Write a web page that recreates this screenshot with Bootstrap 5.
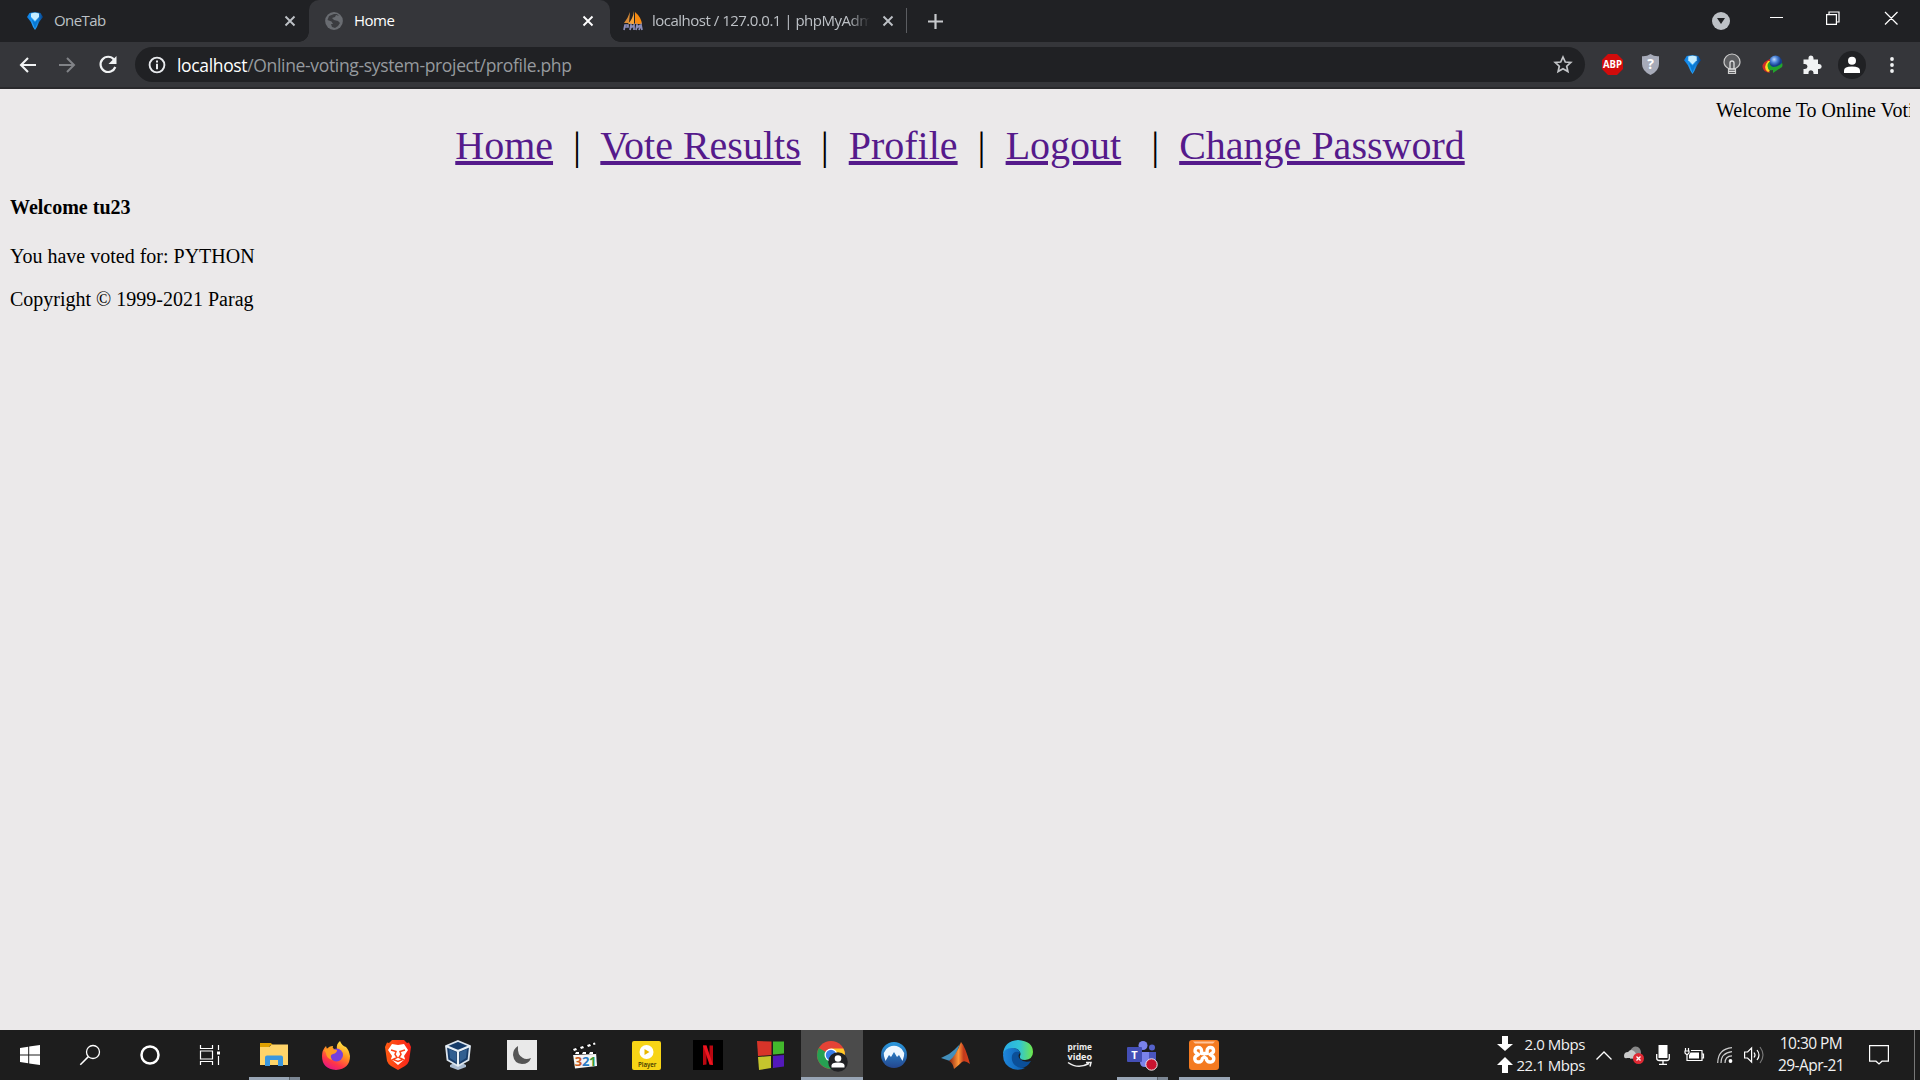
<!DOCTYPE html>
<html lang="en">
<head>
<meta charset="utf-8">
<title>Home</title>
<link href="https://cdn.jsdelivr.net/npm/bootstrap@5.3.0/dist/css/bootstrap.min.css" rel="stylesheet">
<style>
body{width:1920px;height:1080px;overflow:hidden;background:#ebe9ea;font-family:"Open Sans","Noto Sans",sans-serif}
svg{display:block;flex:none;overflow:visible}
.tabstrip{height:42px;background:#202124;color:#bdc1c6;font-size:15px}
.tab-item{height:42px;line-height:40px}
.tab-one{width:309px;padding-left:27px;padding-right:13px}
.tab-live{width:301px;padding-left:16px;padding-right:16px;background:#35363a;color:#fff;border-radius:10px 10px 0 0}
.tab-live::before,.tab-live::after{content:"";position:absolute;bottom:0;width:10px;height:10px}
.tab-live::before{left:-10px;background:radial-gradient(circle at 0 0,transparent 9.5px,#35363a 10px)}
.tab-live::after{right:-10px;background:radial-gradient(circle at 100% 0,transparent 9.5px,#35363a 10px)}
.tab-pma{width:296px;padding-left:13px;padding-right:12px}
.tab-title{white-space:nowrap;overflow:hidden;margin-left:11px;margin-top:-2px}
.title-one{letter-spacing:-.6px}
.title-home{letter-spacing:-.5px}
.title-pma{width:218px;margin-left:9px;letter-spacing:-.5px;-webkit-mask-image:linear-gradient(90deg,#000 90%,transparent);mask-image:linear-gradient(90deg,#000 90%,transparent)}
.tab-rule{width:1px;height:25px;background:#5b5d61;margin-top:-1px}
.tab-plus{margin-left:21px}
.media-dot{margin-right:40px}
.win-btns{margin-right:22px;margin-top:-6px}
.toolbar{height:47px;background:#35363a;border-bottom:2px solid #29292c}
.nav-back{margin-left:19px}
.nav-fwd{margin-left:23px}
.nav-load{margin:0 18px 0 23px}
.omnibox{width:1450px;height:35px;border-radius:18px;background:#202124;padding:0 12px 0 13px}
.url-text{font-size:17.5px;letter-spacing:-.34px;color:#969a9e;line-height:34px;margin-left:11px;white-space:nowrap}
.ext-list{margin-left:7px}
.ext-slot{width:40px;height:40px}
.page-view{height:941px;padding:10px;color:#000;font-family:"Liberation Serif",serif;font-size:20px;line-height:23px}
.ticker{height:23px;padding-left:1706px;overflow:hidden;white-space:nowrap}
.site-nav{font-size:40px;line-height:46px;margin-top:1px;white-space:nowrap}
.site-nav a{color:#551a8b;text-decoration:underline;text-decoration-thickness:4px;text-underline-offset:2px}
.hello{font-size:20px;line-height:23px;font-weight:700;margin:27px 0 0}
.vote-line{margin:26px 0 0}
.copy-line{margin:20px 0 0}
.taskbar{height:50px;background:#1d1d1d;color:#f1f1f1}
.sys-slot{width:60px;height:50px}
.app-list{margin-left:3px}
.app-slot{width:62px;height:50px}
.app-live{background:#4b4b4b}
.runbar{position:absolute;bottom:0;left:6px;width:51px;height:3px;background:#98a5b5}
.run-many{background:linear-gradient(90deg,#98a5b5 40px,#59616a 40px,#59616a 41px,#7b8693 41px)}
.run-full{left:0;width:62px}
.net-text{width:73px;font-size:15px;line-height:21px;letter-spacing:-.45px;text-align:right;white-space:nowrap}
.net-block{width:100px;padding-left:7px;padding-right:5px}
.clock{width:82px;font-size:15.5px;line-height:22.5px;letter-spacing:-.55px;text-align:center;white-space:nowrap;margin-top:-2px}
.notice{width:54px}
.desk-edge{width:6px;height:50px;border-left:1px solid #777;margin-left:8px}
.w28{width:28px}.w32{width:32px}.w26{width:26px}.w36{width:36px}
</style>
<script src="https://cdn.jsdelivr.net/npm/bootstrap@5.3.0/dist/js/bootstrap.bundle.min.js"></script>
</head>
<body class="d-flex flex-column">
<svg width="0" height="0" class="position-absolute">
<defs>
<linearGradient id="gBlue" x1="0" x2="1"><stop offset="0" stop-color="#0a7be0"/><stop offset=".5" stop-color="#2ba8ff"/><stop offset="1" stop-color="#003c86"/></linearGradient>
<linearGradient id="gFox" x1=".8" y1="0" x2=".3" y2="1"><stop offset="0" stop-color="#fff44f"/><stop offset=".4" stop-color="#ff9a1f"/><stop offset=".75" stop-color="#ff3647"/><stop offset="1" stop-color="#e31587"/></linearGradient>
<linearGradient id="gNord" x2="0" y2="1"><stop offset="0" stop-color="#2b9be0"/><stop offset="1" stop-color="#24468e"/></linearGradient>
<linearGradient id="gEdge" x1="0" x2="1"><stop offset="0" stop-color="#27a9e6"/><stop offset=".55" stop-color="#32c5d5"/><stop offset="1" stop-color="#6fe849"/></linearGradient>
<linearGradient id="gEdgeLow" x1="0" x2="1"><stop offset="0" stop-color="#1f87dc"/><stop offset="1" stop-color="#0c5cae"/></linearGradient>
<linearGradient id="gMat" x1="0" x2="1"><stop offset="0" stop-color="#8a1d10"/><stop offset=".45" stop-color="#ff9838"/><stop offset=".7" stop-color="#c23a1c"/><stop offset="1" stop-color="#d8401a"/></linearGradient>
<linearGradient id="gBrave" x1="0" x2="1"><stop offset="0" stop-color="#ff5a12"/><stop offset="1" stop-color="#f8221a"/></linearGradient>
<radialGradient id="gGlobe" cx=".4" cy=".3"><stop offset="0" stop-color="#c3dcff"/><stop offset=".5" stop-color="#4b83d6"/><stop offset="1" stop-color="#153d8c"/></radialGradient>
<symbol id="onetab" viewBox="0 0 16 18"><path d="M2.500 1Q8-.5 13.500 1L16 5Q12 9 10 15L8 18 6 15Q4 9 0 5Z" fill="url(#gBlue)"/><path d="M4 1.500Q8 0 12 1.500L12 5 8 9 4 5Z" fill="#c6edff"/><path d="M4.500 7L8 10l3.500-3L8 17Z" fill="#0879d4"/></symbol>
<symbol id="cross" viewBox="0 0 12 12"><path d="M1.500 1.500l9 9m0-9l-9 9" stroke="currentColor" stroke-width="1.9"/></symbol>
</defs>
</svg>

<header>
<div class="tabstrip d-flex align-items-center">
  <div class="tab-item tab-one d-flex align-items-center">
    <svg width="16" height="18"><use href="#onetab"/></svg>
    <span class="tab-title title-one flex-grow-1">OneTab</span>
    <svg width="12" height="12"><use href="#cross"/></svg>
  </div>
  <div class="tab-item tab-live position-relative d-flex align-items-center">
    <svg width="18" height="18" viewBox="0 0 18 18"><circle cx="9" cy="9" r="8.900" fill="#696c71"/><path d="M9 2L4 4 2.500 8l4 1.500 1.500 2.500H6l1 3 3 1 3-2 2-3-2-2-4-1-2-2 3-1 1-2 3 1-2-2Z" fill="#3b3c40"/></svg>
    <span class="tab-title title-home flex-grow-1">Home</span>
    <svg width="12" height="12"><use href="#cross"/></svg>
  </div>
  <div class="tab-item tab-pma d-flex align-items-center">
    <svg width="20" height="20" viewBox="0 0 20 20"><path d="M7 1L6 12H1Q5 7 7 1Z" fill="#d98b36"/><path d="M11 0V13H5Q10 8 11 0Z" fill="#f5a33a"/><path d="M12 1Q18 6 19 13H12Z" fill="#f78a10"/><path d="M1 19l1-5h3v2H2m5 3l1-5 1 2 2-2v5m2 0l1-5 1 2 2-2m-1 5l2-5 1 5" stroke="#8c8db9" stroke-width="1.700" fill="none"/></svg>
    <span class="tab-title title-pma">localhost / 127.0.0.1 | phpMyAdmin</span>
    <svg class="ms-auto" width="12" height="12"><use href="#cross"/></svg>
  </div>
  <div class="tab-rule"></div>
  <svg width="15" height="15" class="tab-plus me-auto" viewBox="0 0 15 15"><path d="M7.500 0v15M0 7.500h15" stroke="#c7c9cc" stroke-width="2.200"/></svg>
  <svg width="18" height="18" viewBox="0 0 18 18" class="media-dot"><circle cx="9" cy="9" r="9" fill="#bdc1c6"/><path d="M5 6h8L9 12Z" fill="#202124"/></svg>
  <svg width="128" height="14" viewBox="0 0 128 14" class="win-btns"><g fill="none" stroke="#fff" stroke-width="1.200"><path d="M0 6.500h13M56.600 3.600h9.800v9.800h-9.800ZM59 3.600V1h10v10h-2.600M115 1l12.500 12.500m0-12.500L115 13.500"/></g></svg>
</div>
<div class="toolbar d-flex align-items-center">
  <svg width="17" height="16" viewBox="0 0 17 16" class="nav-back"><path d="M17 8H2m7-7L2 8l7 7" fill="none" stroke="#f1f3f4" stroke-width="2.100"/></svg>
  <svg width="17" height="16" viewBox="0 0 17 16" class="nav-fwd"><path d="M0 8h15M8 1l7 7-7 7" fill="none" stroke="#818387" stroke-width="2"/></svg>
  <svg width="18" height="18" viewBox="0 0 18 18" class="nav-load"><path d="M15 3.500A7.600 7.600 0 1 0 16.300 11" fill="none" stroke="#f1f3f4" stroke-width="2.200"/><path d="M17.500 0v8h-8Z" fill="#f1f3f4"/></svg>
  <div class="omnibox d-flex align-items-center">
    <svg width="18" height="18" viewBox="0 0 18 18"><circle cx="9" cy="9" r="7.400" fill="none" stroke="#e8eaed" stroke-width="1.900"/><path d="M9 4.500v1.900M9 7.800v5.500" stroke="#e8eaed" stroke-width="2"/></svg>
    <span class="url-text"><span class="text-white">localhost</span>/Online-voting-system-project/profile.php</span>
    <svg class="ms-auto" width="20" height="19" viewBox="0 0 20 19"><path d="M10 2l2.300 5 5.500.5-4.100 3.700 1.200 5.400L10 13.800l-4.900 2.800 1.200-5.400L2.200 7.500 7.700 7Z" fill="none" stroke="#c3c5c8" stroke-width="1.700"/></svg>
  </div>
  <div class="ext-list d-flex">
    <div class="ext-slot d-flex align-items-center justify-content-center"><svg width="21" height="21" viewBox="0 0 21 21"><path d="M6 0h9l6 6v9l-6 6H6l-6-6V6Z" fill="#d20b0b"/><text x="1" y="14.300" font-family="Open Sans" font-size="10.500" font-weight="700" textLength="19" lengthAdjust="spacingAndGlyphs" fill="#fff">ABP</text></svg></div>
    <div class="ext-slot d-flex align-items-center justify-content-center pe-1"><svg width="19" height="21" viewBox="0 0 19 21"><path d="M9.500 0Q13 2.500 18 2.200V10Q18 17 9.500 21 1 17 1 10V2.200Q6 2.500 9.500 0Z" fill="#a7abb9"/><text x="9.500" y="15" text-anchor="middle" font-family="Open Sans" font-size="14" font-weight="700" fill="#fff">?</text></svg></div>
    <div class="ext-slot d-flex align-items-center justify-content-center"><svg width="17" height="19"><use href="#onetab"/></svg></div>
    <div class="ext-slot d-flex align-items-center justify-content-center"><svg width="18" height="21" viewBox="0 0 18 21"><path d="M5.500 14.500Q1 12 1 8a8 8 0 0 1 16 0q0 4-4.500 6.500v5h-7Z" fill="#5c5d60" stroke="#ccc" stroke-width="1.200"/><path d="M7 15V9q0-2 2-2t2 2v6M5.500 15h7m-7 2.400h7" fill="none" stroke="#ddd" stroke-width="1.300"/></svg></div>
    <div class="ext-slot d-flex align-items-center justify-content-center"><svg width="21" height="20" viewBox="0 0 21 20"><circle cx="13.500" cy="7" r="6.500" fill="url(#gGlobe)"/><path d="M8 4Q0 7 .5 12 1 17 8 18L6 14Q4 10 8 7Z" fill="#cf2b28"/><path d="M8 6Q3 9 4 13q2 3 7 2v3l9-6q1-2 0-4-4 4-9 4-4-1-3-6Z" fill="#22a52c"/><path d="M6 6Q0 13 6 17l2-1Q3 11 8 6Z" fill="#ffd820"/></svg></div>
    <div class="ext-slot d-flex align-items-center justify-content-center"><svg width="20" height="20" viewBox="0 0 20 20"><path d="M1.500 4.500H6.500V3a2.500 2.500 0 0 1 5 0V4.500H16V9h1.200a2.500 2.500 0 0 1 0 5H16v5H11.500v-1.300a2.500 2.500 0 0 0-5 0V19H1.500V14H3a2.500 2.500 0 0 0 0-5H1.500Z" fill="#f1f3f4"/></svg></div>
    <div class="ext-slot d-flex align-items-center justify-content-center"><svg width="28" height="28" viewBox="0 0 28 28"><circle cx="14" cy="14" r="14" fill="#202124"/><circle cx="14" cy="9.800" r="4" fill="#fff"/><path d="M6 22v-2.500q0-4 8-4t8 4V22Z" fill="#fff"/></svg></div>
    <div class="ext-slot d-flex align-items-center justify-content-center"><svg width="4" height="16" viewBox="0 0 4 16"><g fill="#f1f3f4"><circle cx="2" cy="2" r="1.900"/><circle cx="2" cy="8" r="1.900"/><circle cx="2" cy="14" r="1.900"/></g></svg></div>
  </div>
</div>
</header>

<main class="page-view">
  <div class="ticker">Welcome To Online Voting System</div>
  <nav class="site-nav text-center"><a href="#">Home</a>&nbsp; |&nbsp; <a href="#">Vote Results</a>&nbsp; |&nbsp; <a href="#">Profile</a>&nbsp; |&nbsp; <a href="#">Logout</a>&nbsp;&nbsp; |&nbsp; <a href="#">Change Password</a></nav>
  <h4 class="hello">Welcome tu23</h4>
  <p class="vote-line">You have voted for: PYTHON</p>
  <p class="copy-line">Copyright © 1999-2021 Parag</p>
</main>

<footer class="taskbar d-flex align-items-center">
  <div class="sys-slot d-flex align-items-center justify-content-center"><svg width="20" height="20" viewBox="0 0 20 20"><path d="M0 3l8.200-1.200V9.500H0ZM9.200 1.600L20 0v9.500H9.200ZM0 10.500h8.200v7.700L0 17ZM9.200 10.500H20V20L9.200 18.400Z" fill="#fff"/></svg></div>
  <div class="sys-slot d-flex align-items-center justify-content-center"><svg width="20" height="20" viewBox="0 0 20 20"><circle cx="13" cy="7" r="6.500" fill="none" stroke="#fff" stroke-width="1.300"/><path d="M8.400 11.600L.3 19.700" stroke="#fff" stroke-width="1.500"/></svg></div>
  <div class="sys-slot d-flex align-items-center justify-content-center"><svg width="20" height="20" viewBox="0 0 20 20"><circle cx="10" cy="10" r="8.500" fill="none" stroke="#fff" stroke-width="2.500"/></svg></div>
  <div class="sys-slot d-flex align-items-center justify-content-center"><svg width="20" height="20" viewBox="0 0 20 20"><path d="M.5 0v3.500h12V0M.5 20v-3.500h12V20M.5 6h12v8H.5ZM18.500 0v5m0 6v9" fill="none" stroke="#fff" stroke-width="1.200"/><path d="M17 6.500h3v3h-3Z" fill="#fff"/></svg></div>
  <div class="app-list d-flex">
    <div class="app-slot position-relative d-flex align-items-center justify-content-center"><svg width="28" height="24" viewBox="0 0 28 24"><path d="M0 0h11l2 2.500h-3L8 6H0Z" fill="#dfa000"/><path d="M0 4h9l3-2.500h16V22H0Z" fill="#ffd469"/><path d="M5 23V14.500q0-2 2-2h14q2 0 2 2V23h-5v-6h-8v6Z" fill="#3b97de"/></svg><span class="runbar run-many"></span></div>
    <div class="app-slot d-flex align-items-center justify-content-center"><svg width="28" height="29" viewBox="0 0 28 29"><path d="M18 0q2 5 6 6 3 3 4 9 0 13-14 14Q0 28 0 15 0 9 4 5l1 3q2-3 6-3-1 2 1 3h3q-1-5 3-8Z" fill="url(#gFox)"/><circle cx="14.500" cy="14" r="6.500" fill="#7640dc"/><path d="M2 9q4-3 8-1l5 1q0 3-4 4-4 1-1 6-6-2-6-7Z" fill="#ff9c22"/></svg></div>
    <div class="app-slot d-flex align-items-center justify-content-center"><svg width="26" height="30" viewBox="0 0 26 30"><path d="M7 0h12l3 3 2-.5L26 7l-2 14q-1 3-4 5l-7 4-7-4q-3-2-4-5L0 7l2-4.500L4 3Z" fill="url(#gBrave)"/><path d="M7 4l6 1 6-1 4 6-4 6 1 3-7 6-7-6 1-3-4-6Z" fill="#fff"/><path d="M6 10l5 1.500-1 3 2 3-4 2 5 2 5-2-4-2 2-3-1-3 5-1.500" fill="none" stroke="#fb4318" stroke-width="1.500"/></svg></div>
    <div class="app-slot d-flex align-items-center justify-content-center pe-1"><svg width="26" height="30" viewBox="0 0 26 30"><path d="M5 25l8-4 8 4v2l-8 3-8-3Z" fill="#a9bbd0"/><path d="M13 1l12 5-1.500 14L13 26 2.500 20 1 6Z" fill="#173c69" stroke="#dce5ee" stroke-width="1.800"/><path d="M1 6l12 5 12-5M13 11v15" fill="none" stroke="#e8f0f6" stroke-width="2.200"/><path d="M4 9l7 3v10l-6-4Zm18 0l-7 3v10l6-4Z" fill="#315f91"/></svg></div>
    <div class="app-slot d-flex align-items-center justify-content-center"><svg width="30" height="30" viewBox="0 0 30 30"><path fill="#e9e9e9" d="M0 0h30v30H0Z"/><path d="M11 6q-1 9 5 12 3 2 8 0-2 6-9 6-8-.5-9-9 0-6 5-9Z" fill="#555"/></svg></div>
    <div class="app-slot d-flex align-items-center justify-content-center"><svg width="27" height="28" viewBox="0 0 27 28"><path d="M2 13L25 11l1 14L4 27.500Z" fill="#f5f5f5"/><path d="M0 8L24 1l.5 3L1 10Zm1 3h24v2L2 14Z" fill="#111"/><path d="M2 8l3-1 1 2-3 1Zm7-2l3-1 1 2-3 1Zm7-2l3-1 1 2-3 1Zm6-2l2-.5.500 2-2 .5ZM5 11h3v2H4Zm7 0h3v2h-4Zm7 0h3v2h-4Z" fill="#fff"/><text y="24.500" font-family="Open Sans" font-size="13" font-weight="700"><tspan x="3.700" fill="#ca5a20">3</tspan><tspan x="11" fill="#287ac4">2</tspan><tspan x="18" fill="#38983a">1</tspan></text></svg></div>
    <div class="app-slot d-flex align-items-center justify-content-center"><svg width="29" height="29" viewBox="0 0 29 29"><rect width="29" height="29" rx="2" fill="#f7d416"/><circle cx="14.500" cy="11" r="7" fill="#fff"/><path d="M12.500 8l5 3-5 3Z" fill="#e9b800"/><text x="6" y="25.500" font-family="Open Sans" font-size="7" font-weight="600" fill="#373300" textLength="18.500" lengthAdjust="spacingAndGlyphs">Player</text></svg></div>
    <div class="app-slot d-flex align-items-center justify-content-center"><svg width="30" height="30" viewBox="0 0 30 30"><path d="M0 0h30v30H0Z"/><path d="M10 5.500h3.500v19L10 25Zm6.500 0H20V25l-3.500-.5Z" fill="#b90710"/><path d="M10 5.500h3.500L20 25l-3.500-.5Z" fill="#ed1520"/></svg></div>
    <div class="app-slot d-flex align-items-center justify-content-center"><svg width="27" height="29" viewBox="0 0 27 29"><path d="M0 0l14.500.5V14L1 15Z" fill="#d83429"/><path d="M16 .5h11V12.500l-11 1Z" fill="#43b82d"/><path d="M1 16l13-1v12L2 29Z" fill="#c5c52d"/><path d="M16 15l11-1v11.500L16 27Z" fill="#5319ba"/></svg></div>
    <div class="app-slot app-live position-relative d-flex align-items-center justify-content-center"><svg width="30" height="30" viewBox="0 0 30 30"><circle cx="14" cy="15" r="14" fill="#e54336"/><path d="M14 15L1.900 8A14 14 0 0 0 14 29l5-9Z" fill="#26a152"/><path d="M14 8.500h12.400a14 14 0 0 1-12.400 20.500l6-11Z" fill="#ffc928"/><circle cx="14" cy="15" r="6.500" fill="#fff"/><circle cx="14" cy="15" r="5.200" fill="#387de8"/><circle cx="21" cy="22" r="9.800" fill="#202124"/><circle cx="21" cy="18.500" r="3.300" fill="#fff"/><path d="M14.500 27.500v-2q0-3 6.500-3t6.500 3v2Z" fill="#fff"/></svg><span class="runbar run-full"></span></div>
    <div class="app-slot d-flex align-items-center justify-content-center"><svg width="26" height="26" viewBox="0 0 26 26"><circle cx="13" cy="13" r="13" fill="url(#gNord)"/><path d="M4.500 19Q0 9 8 5q5-2.500 10 0 8 4 3.500 14l-3.500-6-2 2-3-5-3 5-2-2Z" fill="#edf7ff"/></svg></div>
    <div class="app-slot d-flex align-items-center justify-content-center"><svg width="30" height="27" viewBox="0 0 30 27"><path d="M0 16l8-4 5-4 6-6-6 15-4 2Z" fill="#438fbb"/><path d="M20 0q4 4 9 22-5-4-8-2-3 3-8 7-1-6-5-8 7-5 12-19Z" fill="url(#gMat)"/></svg></div>
    <div class="app-slot d-flex align-items-center justify-content-center"><svg width="30" height="30" viewBox="0 0 30 30"><path d="M0 14Q1 1 15 0q15 1 15 12 0 7-8 8-6 0-5-4 1-2 0-4-4-8-17 2Z" fill="url(#gEdge)"/><path d="M0 15Q1 8 9 8q7 0 8 5-4-2-6 1-4 8 4 12 4 2 7 2-5 3-12 1Q0 25 0 15Z" fill="url(#gEdgeLow)"/><path d="M12 12q3-1 5 1-3 3 0 6 4 4 11 2-4 7-10 7-8-2-9-8-1-6 3-8Z" fill="#0b4f98"/></svg></div>
    <div class="app-slot d-flex align-items-center justify-content-center"><svg width="26" height="28" viewBox="0 0 26 28"><g font-family="Open Sans" font-size="9" font-weight="700" fill="#eee"><text x="0.500" y="9" textLength="24.500" lengthAdjust="spacingAndGlyphs">prime</text><text x="0.500" y="18.500" textLength="24.500" lengthAdjust="spacingAndGlyphs">video</text></g><path d="M1 21.500q10 7 21 1M19 21.500h5l-1 4" fill="none" stroke="#eee" stroke-width="1.500"/></svg></div>
    <div class="app-slot position-relative d-flex align-items-center justify-content-center"><svg width="30" height="30" viewBox="0 0 30 30"><circle cx="16" cy="5.500" r="4.500" fill="#7982eb"/><circle cx="25" cy="7.500" r="3" fill="#5663cb"/><path d="M13 12h9v15h-4q-5 0-5-5Z" fill="#7b83eb"/><path d="M22 12h7v12h-7Z" fill="#4a55be"/><rect y="7" width="15" height="15" rx="1" fill="#444fb6"/><text x="7.500" y="18.500" text-anchor="middle" font-family="Open Sans" font-size="11" font-weight="700" fill="#fff">T</text><circle cx="24.500" cy="24.500" r="5.700" fill="#c91430" stroke="#eee" stroke-width="1"/></svg><span class="runbar run-many"></span></div>
    <div class="app-slot position-relative d-flex align-items-center justify-content-center"><svg width="30" height="30" viewBox="0 0 30 30"><rect width="30" height="30" rx="3" fill="#f47a20"/><path d="M4 1.500h22l-2 2H6Z" fill="#ffc49a"/><path d="M12.500 13.500V10.500a3 3 0 0 0-3-3h-.5a3 3 0 0 0-1 5.800l1.500 1.200-2 1.200a3.400 3.400 0 0 0 1.300 6.300h1a3.500 3.500 0 0 0 3.500-3.500l2-1.500 2 1.500a3.500 3.500 0 0 0 3.500 3.500h1a3.400 3.400 0 0 0 1.300-6.300l-2-1.200 1.500-1.200a3 3 0 0 0-1-5.800h-.5a3 3 0 0 0-3 3v3Z" fill="none" stroke="#fff" stroke-width="3.400" stroke-linejoin="round"/></svg><span class="runbar"></span></div>
  </div>
  <div class="d-flex align-items-center ms-auto">
    <div class="net-block d-flex align-items-center justify-content-between">
      <svg width="16" height="38" viewBox="0 0 16 38"><path d="M5 0h6v8h5l-8 7-8-7h5ZM5 37h6v-8h5l-8-8-8 8h5Z" fill="#fff"/></svg>
      <div class="net-text">2.0 Mbps<br>22.1 Mbps</div>
    </div>
    <div class="w28 d-flex justify-content-center"><svg width="16" height="9" viewBox="0 0 16 9"><path d="M.5 8.500L8 1l7.500 7.500" fill="none" stroke="#fff" stroke-width="1.300"/></svg></div>
    <div class="w32 d-flex justify-content-center"><svg width="20" height="18" viewBox="0 0 20 18"><path d="M6 5q3-6 8-4 3 2 3 6v6H6Z" fill="#888"/><path d="M0 10q0-4 4-4 3-4 7 0l3 6H3Q0 13 0 10Z" fill="#cacaca"/><circle cx="14.500" cy="12.500" r="5.500" fill="#df2933"/><path d="M12.500 10.500l4 4m0-4l-4 4" stroke="#fff" stroke-width="1.300"/></svg></div>
    <div class="w26 d-flex justify-content-center"><svg width="14" height="20" viewBox="0 0 14 20"><path d="M2.500 0h9v13h-9Z" fill="#fff"/><path d="M.7 9v4q0 2.500 2.500 2.500h7.600q2.500 0 2.500-2.500V9M7 15v4M3 19.300h8" fill="none" stroke="#fff" stroke-width="1.300"/></svg></div>
    <div class="w36 d-flex justify-content-center"><svg width="20" height="14" viewBox="0 0 20 14"><path d="M1 3h4v2L3 7 1 5ZM1.500 0v3m3-3v3M3 7v5.500h15V2.500H7M18.500 6h1v4h-1" fill="none" stroke="#fff" stroke-width="1.200"/><path d="M6.500 4.500H15v6H5V7Z" fill="#fff"/></svg></div>
    <div class="w26 d-flex justify-content-center"><svg width="16" height="16" viewBox="0 0 16 16"><path d="M.7 16Q1 2 15 .7M4 16Q4 6 15 4.700M8 16q0-7 7-7.200" fill="none" stroke="#ccc" stroke-width="1.200"/><circle cx="13.500" cy="14" r="1.900" fill="#fff"/></svg></div>
    <div class="w32 d-flex justify-content-center"><svg width="20" height="18" viewBox="0 0 20 18"><path d="M.6 6h3l4-4v14l-4-4h-3ZM10 6.500q2 2.500 0 5M13 4q4 5 0 10" fill="none" stroke="#fff" stroke-width="1.200"/><path d="M16 1q6 8 0 16" fill="none" stroke="#777" stroke-width="1.200"/></svg></div>
    <div class="clock">10:30 PM<br>29-Apr-21</div>
    <div class="notice d-flex justify-content-center"><svg width="20" height="20" viewBox="0 0 20 20"><path d="M.6.6h18.800v15.600H13L10 19l-3-2.800H.6Z" fill="none" stroke="#fff" stroke-width="1.200"/></svg></div>
    <div class="desk-edge"></div>
  </div>
</footer>
</body>
</html>
